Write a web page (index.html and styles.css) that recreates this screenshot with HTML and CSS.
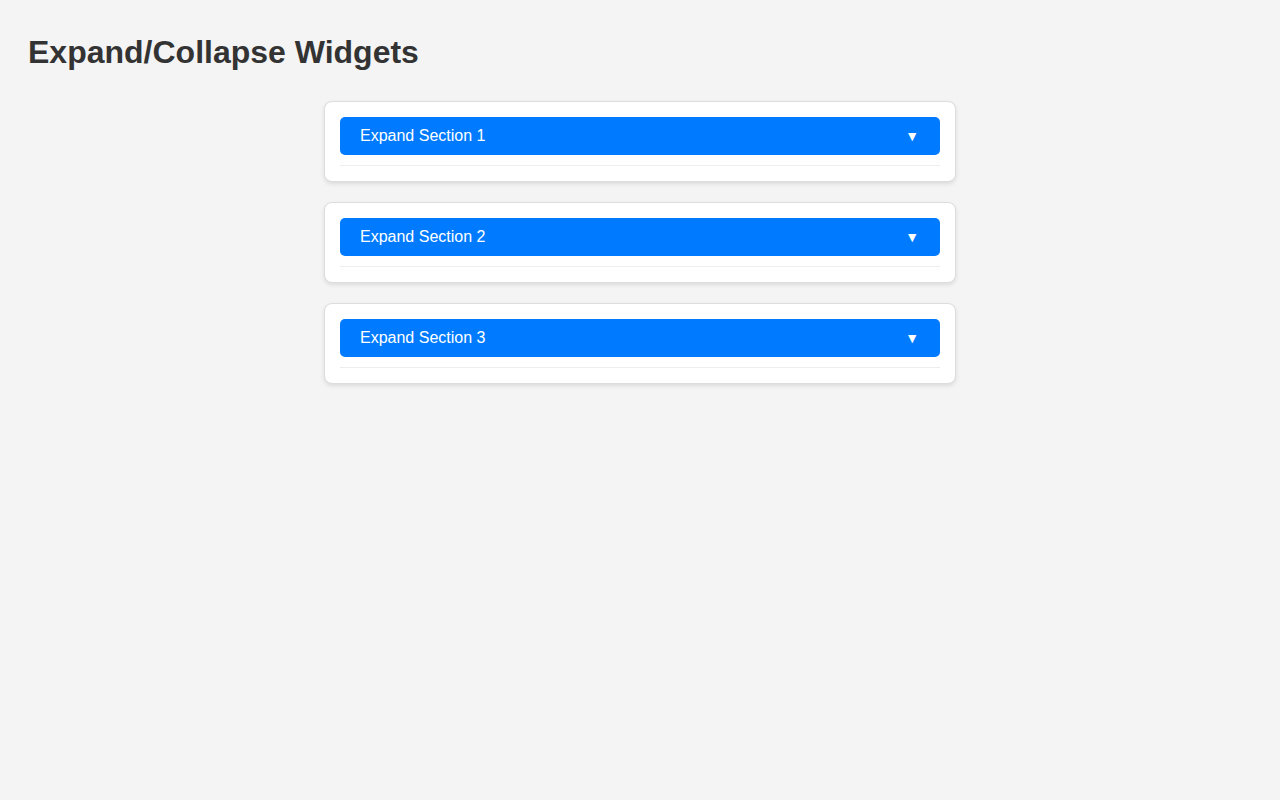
FILE: index.html
```html
<!DOCTYPE html>
<html>
<head>
  <meta charset="UTF-8">
  <title>Expand/Collapse Widgets</title>
  <link rel="stylesheet" href="styles.css">
</head>
<body>
<h1>Expand/Collapse Widgets</h1>
<div class="widgets">
  <div class="widget">
    <button class="toggle" type="button" onclick="toggle(this)">
      <span>Expand Section 1</span>
      <span class="arrow">&#9660;</span>
    </button>
    <div class="content">
      <p>This is the content of section 1.</p>
    </div>
  </div>
  <div class="widget">
    <button class="toggle" type="button" onclick="toggle(this)">
      <span>Expand Section 2</span>
      <span class="arrow">&#9660;</span>
    </button>
    <div class="content">
      <p>This is the content of section 2.</p>
    </div>
  </div>
  <div class="widget">
    <button class="toggle" type="button" onclick="toggle(this)">
      <span>Expand Section 3</span>
      <span class="arrow">&#9660;</span>
    </button>
    <div class="content">
      <p>This is the content of section 3.</p>
    </div>
  </div>
</div>
<script type="text/javascript">
  function toggle(btn) {
    var content = btn.nextElementSibling;
    var open = content.classList.toggle("open");
    btn.querySelector(".arrow").innerHTML = open ? "&#9650;" : "&#9660;";
  }
</script>
</body>
</html>
```

FILE: styles.css
```css
body {
  margin: 0;
  padding: 20px 28px;
  font-family: 'Liberation Sans', Arial, sans-serif;
  background: #f4f4f4;
  color: #333;
}
h1 {
  margin: 14px 0 30px 0;
  font-size: 32px;
  font-weight: bold;
  color: #333;
}
.widgets {
  display: flex;
  flex-direction: column;
  align-items: center;
  gap: 20px;
}
.widget {
  width: 600px;
  padding: 15px;
  background: #fff;
  border: 1px solid #ddd;
  border-radius: 8px;
  box-shadow: 0 2px 4px rgba(0,0,0,0.1);
}
.toggle {
  display: flex;
  justify-content: space-between;
  align-items: center;
  width: 100%;
  padding: 10px 20px;
  border: none;
  border-radius: 5px;
  background: #007bff;
  color: #fff;
  font-family: inherit;
  font-size: 16px;
  line-height: 18px;
  text-align: left;
  cursor: pointer;
}
.toggle:hover {
  background: #0069d9;
}
.arrow {
  font-size: 14px;
  margin-right: 1px;
}
.content {
  margin-top: 10px;
  border-bottom: 1px solid #eee;
}
.content p {
  display: none;
  margin: 10px 0;
  line-height: 1.5;
}
.content.open p {
  display: block;
}
```
